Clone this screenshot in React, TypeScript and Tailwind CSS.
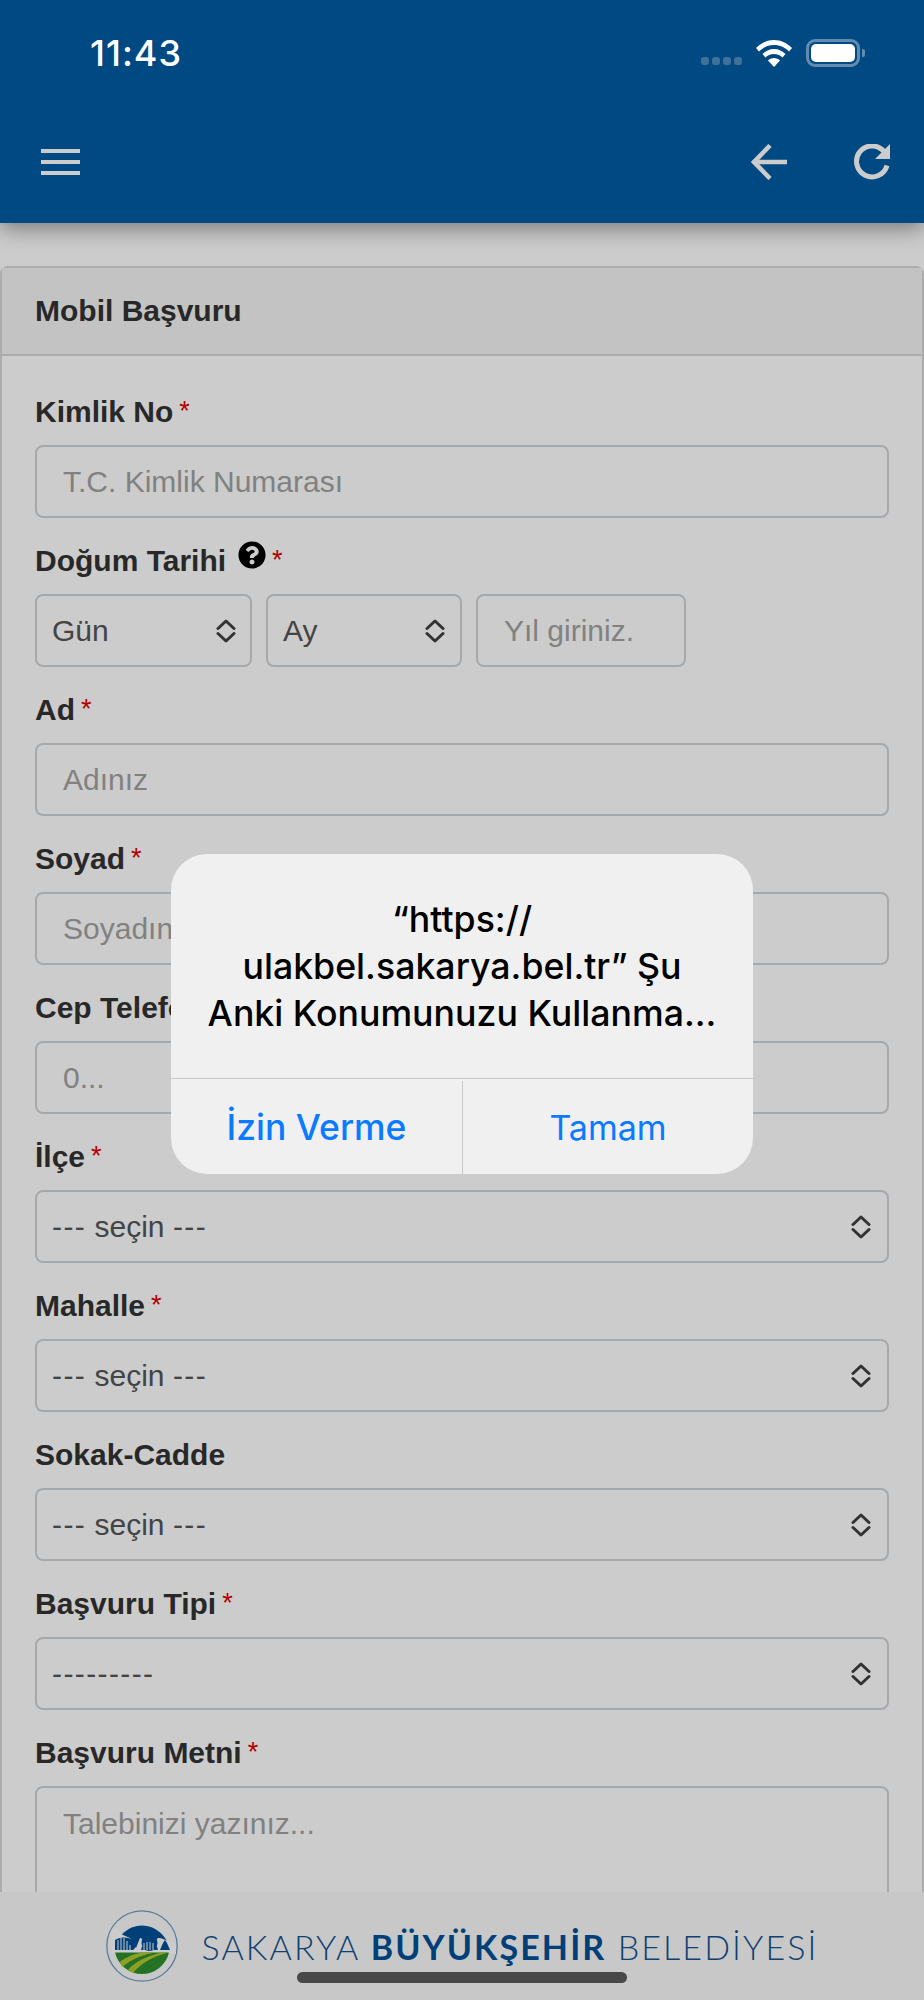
import React from "react";
import { FaQuestionCircle } from "react-icons/fa";

const Required = () => (
  <span className="relative -top-[2px] ml-[6px] text-[27px] font-normal text-[#e00000]">*</span>
);

const Chevrons = () => (
  <svg width="22" height="24" viewBox="0 0 22 24" fill="none" stroke="#3f3f3f" strokeWidth="3" strokeLinecap="round" strokeLinejoin="round" className="shrink-0">
    <path d="M3 9.5 L11 2 L19 9.5" />
    <path d="M3 14.5 L11 22 L19 14.5" />
  </svg>
);

const Label = ({ text, required }: { text: string; required?: boolean }) => (
  <label className="block h-[42px] mb-[12px] text-[30px] leading-[42px] font-bold text-[#333333]">
    {text}
    {required && <Required />}
  </label>
);

const TextInput = ({ placeholder, className = "" }: { placeholder: string; className?: string }) => (
  <input
    type="text"
    placeholder={placeholder}
    className={`h-[73px] border-2 border-[#ced4da] rounded-[8px] bg-white pl-[26px] text-[30px] text-[#555555] placeholder:text-[#a2a2a2] outline-none ${className}`}
  />
);

const SelectBox = ({ value, className = "pr-[15px]" }: { value: React.ReactNode; className?: string }) => (
  <div className={`h-[73px] border-2 border-[#ced4da] rounded-[8px] bg-white pl-[15px] flex items-center justify-between text-[30px] text-[#555555] ${className}`}>
    <span>{value}</span>
    <Chevrons />
  </div>
);

const Logo = () => (
  <svg width="72" height="72" viewBox="0 0 72 72" className="shrink-0">
    <circle cx="36" cy="36" r="35.2" fill="none" stroke="#6f9cc4" strokeWidth="1.3" />
    <path d="M8 40 A28.5 30 0 0 1 64 40 Z" fill="#004f97" />
    <path d="M5 44 L5 20 L12 20 C14 24 17 25 24 28 L30 38 L34 28 L54 28 L60 30 L70 34 L70 44 Z" fill="#ffffff" />
    <path d="M9 40 V30 A11 7 0 0 1 27 40 Z" fill="#004f97" />
    <path d="M12 40 V30 M15 40 V28 M18 40 V28 M21 40 V31 M24 40 V35" stroke="#ffffff" strokeWidth="1" />
    <circle cx="43.5" cy="33" r="8" fill="#004f97" />
    <path d="M43.5 23 V28 M36 27 L39 30 M51 27 L48 30" stroke="#004f97" strokeWidth="3" />
    <path d="M35 40 H52 A8.5 7 0 0 0 35 40 Z" fill="#004f97" />
    <path d="M38 40 V33 M41 40 V32 M44 40 V32 M47 40 V33" stroke="#ffffff" strokeWidth="1" />
    <path d="M54 40 H64 L61 33 L59 30 L57 33 Z" fill="#004f97" />
    <path d="M9 42.5 H63 A28 28 0 0 1 36 64 A28 28 0 0 1 9 42.5 Z" fill="#2f8f2e" />
    <path d="M16 57 C26 49 38 44 50 42.5 L36 42.5 C28 44 18 48 14 52 Z" fill="#b3c62f" />
    <path d="M27 63 C34 54 46 47 62 42.5 L55 42.5 C42 46 28 52 22 60 Z" fill="#b3c62f" />
  </svg>
);

const Dashes = ({ n }: { n: number }) => (
  <span className="tracking-[1.4px]">{"-".repeat(n)}</span>
);

const chooseText = (
  <>
    <Dashes n={3} /> seçin <Dashes n={3} />
  </>
);

const fields = [
  { label: "Ad", required: true, placeholder: "Adınız" },
  { label: "Soyad", required: true, placeholder: "Soyadınız" },
  { label: "Cep Telefonu", required: true, placeholder: "0..." },
];

const selects = [
  { label: "İlçe", required: true, value: chooseText },
  { label: "Mahalle", required: true, value: chooseText },
  { label: "Sokak-Cadde", required: false, value: chooseText },
  { label: "Başvuru Tipi", required: true, value: <Dashes n={9} /> },
];

export default function App() {
  return (
    <div className="relative w-[924px] h-[2000px] overflow-hidden bg-white font-['Liberation_Sans',Arial,sans-serif]">
      {/* Header */}
      <header className="relative z-10 h-[223px] bg-[#005ca4] shadow-[0_4px_22px_rgba(0,0,0,0.45)] flex flex-col justify-end pb-[43px]">
        <div className="flex items-center justify-between pl-[41px] pr-[34px] h-[36px]">
          <div className="w-[39px] flex flex-col gap-[6.5px]">
            <div className="h-[4.5px] bg-white" />
            <div className="h-[4.5px] bg-white" />
            <div className="h-[4.5px] bg-white" />
          </div>
          <div className="flex items-center gap-[67px]">
            <svg width="36" height="36" viewBox="0 0 36 36" fill="none" stroke="#ffffff" strokeWidth="4.6">
              <path d="M19 1.5 L3 18 L19 34.5" />
              <path d="M3 18 H36" />
            </svg>
            <svg width="36" height="36" viewBox="0 0 36 36" fill="none">
              <path d="M30 7.5 A15.5 15.5 0 1 0 33 21.5" stroke="#ffffff" strokeWidth="5" />
              <path d="M36 0 V15 H21 Z" fill="#ffffff" />
            </svg>
          </div>
        </div>
      </header>

      {/* Form panel */}
      <main className="pt-[43px]">
        <section className="border-2 border-[#d8d8d8] rounded-[8px]">
          <div className="h-[88px] bg-[#f4f4f4] border-b-2 border-[#d8d8d8] flex items-center px-[33px] pb-[1px] text-[30px] font-bold text-[#333333]">
            Mobil Başvuru
          </div>
          <div className="px-[33px] pt-[35px] flex flex-col gap-[22px]">
            <div className="flex flex-col">
              <Label text="Kimlik No" required />
              <TextInput placeholder="T.C. Kimlik Numarası" />
            </div>

            <div className="flex flex-col">
              <label className="flex items-baseline h-[42px] mb-[12px] text-[30px] leading-[42px] font-bold text-[#333333]">
                Doğum Tarihi
                <FaQuestionCircle className="ml-[12px] self-start mt-[1px] text-[28px] text-black" />
                <Required />
              </label>
              <div className="flex gap-[14px]">
                <SelectBox value="Gün" className="w-[217px] pr-[13px]" />
                <SelectBox value="Ay" className="w-[196px] pr-[14px]" />
                <TextInput placeholder="Yıl giriniz." className="w-[210px]" />
              </div>
            </div>

            {fields.map((f) => (
              <div key={f.label} className="flex flex-col">
                <Label text={f.label} required={f.required} />
                <TextInput placeholder={f.placeholder} />
              </div>
            ))}

            {selects.map((s) => (
              <div key={s.label} className="flex flex-col">
                <Label text={s.label} required={s.required} />
                <SelectBox value={s.value} />
              </div>
            ))}

            <div className="flex flex-col">
              <Label text="Başvuru Metni" required />
              <textarea
                placeholder="Talebinizi yazınız..."
                className="h-[160px] border-2 border-[#ced4da] rounded-[8px] pl-[26px] pt-[13px] text-[30px] placeholder:text-[#a2a2a2] outline-none resize-none"
              />
            </div>
          </div>
        </section>
      </main>

      {/* Footer logo bar */}
      <footer className="absolute left-0 right-0 bottom-0 h-[108px] bg-[#fafafa] flex items-start justify-center gap-[24px] pt-[18px]">
        <Logo />
        <div className="pt-[18px] text-[34px] leading-[38px] text-[#14528f] font-['Lato',sans-serif] font-light tracking-[2.1px] whitespace-nowrap">
          SAKARYA <span className="font-bold text-[#004f96]">BÜYÜKŞEHİR</span> BELEDİYESİ
        </div>
      </footer>

      {/* Dim overlay */}
      <div className="absolute inset-0 z-20 bg-black/20" />

      {/* Status bar */}
      <div className="absolute z-30 left-0 right-0 top-[30px] h-[46px] pl-[90px] pr-[59px] flex items-center justify-between text-white">
        <span className="text-[36px] font-medium font-['Inter',sans-serif] tracking-[1px]">11:43</span>
        <div className="flex items-center">
          <div className="flex gap-[3px] mt-[16px] mr-[14px]">
            <div className="w-[8px] h-[8px] rounded-[3px] bg-[#3f7199]" />
            <div className="w-[8px] h-[8px] rounded-[3px] bg-[#3f7199]" />
            <div className="w-[8px] h-[8px] rounded-[3px] bg-[#3f7199]" />
            <div className="w-[8px] h-[8px] rounded-[3px] bg-[#3f7199]" />
          </div>
          <svg width="36" height="27" viewBox="0 0 36 27" fill="#ffffff" className="mr-[14px]">
            <path d="M18 0 C25 0 31 3 36 8 L33 11.5 C29 7.5 24 5 18 5 C12 5 7 7.5 3 11.5 L0 8 C5 3 11 0 18 0 Z" />
            <path d="M18 9 C22.5 9 26.5 11 29.5 14 L26.5 17.5 C24.5 15.5 21.5 14 18 14 C14.5 14 11.5 15.5 9.5 17.5 L6.5 14 C9.5 11 13.5 9 18 9 Z" />
            <path d="M18 18 C20.5 18 22.5 19 24 20.5 L18 27 L12 20.5 C13.5 19 15.5 18 18 18 Z" />
          </svg>
          <div className="w-[54px] h-[28px] rounded-[9px] border-[3px] border-[#5f8cb0] p-[2px]">
            <div className="w-full h-full rounded-[5px] bg-white" />
          </div>
          <div className="w-[3px] h-[8px] ml-[2px] rounded-r-[2px] bg-[#5f8cb0]" />
        </div>
      </div>

      {/* Location alert */}
      <div className="absolute z-30 left-[171px] top-[854px] w-[582px] h-[320px] rounded-[36px] bg-[#f0f0f0] flex flex-col font-['Inter',sans-serif]">
        <div className="h-[224px] pt-[42px] text-center text-[35.7px] leading-[47px] font-medium text-black whitespace-nowrap">
          “https://
          <br />
          ulakbel.sakarya.bel.tr” Şu
          <br />
          Anki Konumunuzu Kullanma...
        </div>
        <div className="flex-1 flex border-t border-[#c8c8c8] pt-[2px] text-[34px] text-[#0a7aff]">
          <div className="w-[292px] flex items-center justify-center text-[35.5px] font-medium border-r border-[#c8c8c8]">İzin Verme</div>
          <div className="flex-1 flex items-center justify-center">Tamam</div>
        </div>
      </div>

      {/* Home indicator */}
      <div className="absolute z-30 left-[297px] top-[1972px] w-[330px] h-[11px] rounded-full bg-[#484848]" />
    </div>
  );
}
